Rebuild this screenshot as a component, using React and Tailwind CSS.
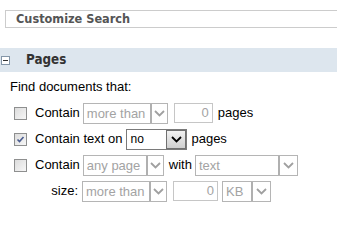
import React from 'react'

const Chevron = ({ color = "#a0a0a0" }) => (
    <svg width="11" height="7" viewBox="0 0 11 7">
        <path d="M1 1 L5.5 5.5 L10 1" fill="none" stroke={color} strokeWidth="1.8" />
    </svg>
)

const DisabledSelect = ({ value, width, arrow = 17 }) => (
    <div className="flex h-[21px] border border-[#b5b5b5] bg-white" style={{ width }}>
        <div className="flex-1 flex items-center pl-[3px] text-[13px] text-[#a3a3a3] leading-none whitespace-nowrap overflow-hidden">{value}</div>
        <div className="flex items-center justify-center border-l-2 border-[#b0b0b0]" style={{ width: arrow }}>
            <Chevron />
        </div>
    </div>
)

const DisabledInput = ({ value, width }) => (
    <div className="flex h-[20px] items-center justify-end border border-[#c6c6c6] bg-white pr-[3px] text-[13px] text-[#a3a3a3]" style={{ width }}>
        {value}
    </div>
)

const Checkbox = ({ checked }) => (
    <div className="w-[13px] h-[13px] border border-[#8e8f8f] bg-gradient-to-br from-[#dcdcdc] to-[#f7f7f7] flex items-center justify-center">
        {checked && (
            <svg width="9" height="9" viewBox="0 0 9 9">
                <path d="M1.5 4.5 L3.5 6.5 L7.5 2" fill="none" stroke="#4a5c8f" strokeWidth="1.6" />
            </svg>
        )}
    </div>
)

const App = () => {
    return (
        <div className="w-[337px] h-[249px] bg-white overflow-hidden font-['Liberation_Sans',Arial,sans-serif] text-[13px] text-black">
            <div className="pt-[10px] pl-[5px]">
                <div className="h-[18px] border border-r-0 border-[#cccccc] flex items-center pl-[10px]">
                    <span className="font-['DejaVu_Sans_Condensed','DejaVu_Sans',sans-serif] font-bold text-[12.6px] text-[#555555]">Customize Search</span>
                </div>
            </div>

            <div className="mt-[20px] h-[24px] bg-[#dde6ee] flex items-center">
                <div className="ml-[1px] w-[9px] h-[9px] border border-[#8496a8] bg-white flex items-center justify-center">
                    <div className="w-[5px] h-[1px] bg-[#333]" />
                </div>
                <span className="ml-[16px] font-['DejaVu_Sans_Condensed','DejaVu_Sans',sans-serif] font-bold text-[13.3px] text-[#333]">Pages</span>
            </div>

            <div className="pl-[10px]">
                <div className="h-[28px] flex items-center pt-[1px]">Find documents that:</div>

                <div className="h-[26px] flex items-center">
                    <div className="ml-[4px]"><Checkbox /></div>
                    <span className="ml-[8px]">Contain</span>
                    <div className="ml-[3px]"><DisabledSelect value="more than" width={85} /></div>
                    <div className="ml-[6px]"><DisabledInput value="0" width={39} /></div>
                    <span className="ml-[5px]">pages</span>
                </div>

                <div className="h-[26px] flex items-center">
                    <div className="ml-[4px]"><Checkbox checked /></div>
                    <span className="ml-[8px]">Contain text on</span>
                    <div className="ml-[4px] flex h-[21px] w-[61px] border border-[#7a7a7a] bg-white">
                        <div className="flex-1 flex items-center pl-[3px] text-[12px] leading-none">no</div>
                        <div className="w-[20px] flex items-center justify-center border border-[#707070] bg-gradient-to-b from-[#f2f2f2] to-[#cfcfcf]">
                            <Chevron color="#000" />
                        </div>
                    </div>
                    <span className="ml-[4px]">pages</span>
                </div>

                <div className="h-[26px] flex items-center">
                    <div className="ml-[4px]"><Checkbox /></div>
                    <span className="ml-[8px]">Contain</span>
                    <div className="ml-[3px]"><DisabledSelect value="any page" width={81} /></div>
                    <span className="ml-[5px]">with</span>
                    <div className="ml-[3px]"><DisabledSelect value="text" width={103} arrow={19} /></div>
                </div>

                <div className="h-[26px] flex items-center">
                    <span className="w-[68px] text-right">size:</span>
                    <div className="ml-[4px]"><DisabledSelect value="more than" width={85} /></div>
                    <div className="ml-[6px]"><DisabledInput value="0" width={45} /></div>
                    <div className="ml-[4px]"><DisabledSelect value="KB" width={49} arrow={19} /></div>
                </div>
            </div>
        </div>
    )
}

export default App
